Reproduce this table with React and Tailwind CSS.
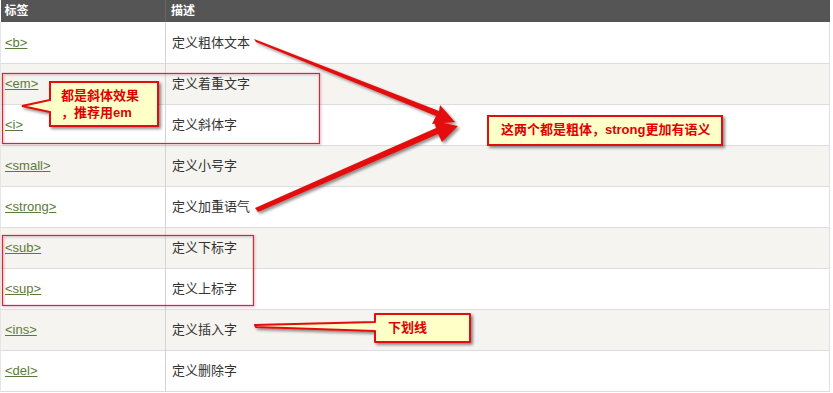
import React from 'react'

const ROWS = [
  ['<b>', '定义粗体文本'],
  ['<em>', '定义着重文字'],
  ['<i>', '定义斜体字'],
  ['<small>', '定义小号字'],
  ['<strong>', '定义加重语气'],
  ['<sub>', '定义下标字'],
  ['<sup>', '定义上标字'],
  ['<ins>', '定义插入字'],
  ['<del>', '定义删除字'],
]

const font = { fontFamily: '"Liberation Sans", Arial, "Noto Sans CJK SC", sans-serif' }

function Notes() {
  return (
    <svg className="absolute inset-0 pointer-events-none" width="833" height="393">
      <defs>
        <filter id="shadow" x="-20%" y="-20%" width="140%" height="160%">
          <feDropShadow dx="2" dy="2" stdDeviation="1.5" floodColor="#000" floodOpacity="0.45" />
        </filter>
        <filter id="soft" x="-5%" y="-5%" width="110%" height="110%">
          <feDropShadow dx="1" dy="1" stdDeviation="1" floodColor="#000" floodOpacity="0.25" />
        </filter>
      </defs>

      {/* grouping frames */}
      <g filter="url(#soft)" fill="none" stroke="#e3222c" strokeWidth="1.2">
        <rect x="2.5" y="73.5" width="317" height="70" />
        <rect x="2.5" y="235.5" width="251" height="70" />
      </g>

      <g filter="url(#shadow)" fill="#e40b0b">
        {/* arrow from <b> */}
        <polygon points="254,39 256,42 436,116 432,124 455,122 440,105 439,111" />
        {/* arrow from <strong> */}
        <polygon points="255,208 258,212 438,134 442,142 458,126 434,121 436,128" />
      </g>

      {/* em callout */}
      <g filter="url(#shadow)">
        <path d="M50,82 H158 V126 H50 V112 L22,106 L50,100 Z" fill="#ffffc8" stroke="#e40b0b" strokeWidth="2" />
      </g>

      {/* strong callout */}
      <g filter="url(#shadow)">
        <rect x="488" y="116" width="234" height="29" fill="#ffffc8" stroke="#e40b0b" strokeWidth="2" />
      </g>

      {/* underline callout */}
      <g filter="url(#shadow)">
        <path d="M375,314 H470 V342 H375 V331 L256,327 L255,325 L375,322 Z" fill="#ffffc8" stroke="#e40b0b" strokeWidth="2" strokeLinejoin="round" />
      </g>
    </svg>
  )
}

export default function App() {
  return (
    <div className="relative w-[833px] h-[393px] bg-white overflow-hidden" style={font}>
      <table className="w-[830px] border-collapse text-[13px]">
        <thead>
          <tr className="h-[22px] bg-[#555555] text-white text-[12px]">
            <th className="w-[165px] pl-[4px] text-left font-bold border-r border-[#666]">标签</th>
            <th className="pl-[5px] text-left font-bold">描述</th>
          </tr>
        </thead>
        <tbody>
          {ROWS.map(([tag, desc], i) => (
            <tr key={tag} className={`h-[41px] border-b border-[#dddddd] ${i % 2 ? 'bg-[#f6f4f0]' : 'bg-white'}`}>
              <td className="pl-[4px] border-r border-[#d4d4d4] border-l border-l-[#e6e6e6]">
                <a className="text-[#5b7b3a] underline">{tag}</a>
              </td>
              <td className="pl-[6px] text-[#333] border-r border-[#e0e0e0]">{desc}</td>
            </tr>
          ))}
        </tbody>
      </table>

      <Notes />

      <div className="absolute left-[61px] top-[87px] text-[13px] leading-[17px] font-bold text-[#e00000]">
        <div>都是斜体效果</div>
        <div>，推荐用em</div>
      </div>
      <div className="absolute left-[501px] top-[122px] text-[13px] leading-[16px] font-bold text-[#e00000]">
        这两个都是粗体，strong更加有语义
      </div>
      <div className="absolute left-[388px] top-[320px] text-[13px] leading-[16px] font-bold text-[#e00000]">
        下划线
      </div>
    </div>
  )
}
